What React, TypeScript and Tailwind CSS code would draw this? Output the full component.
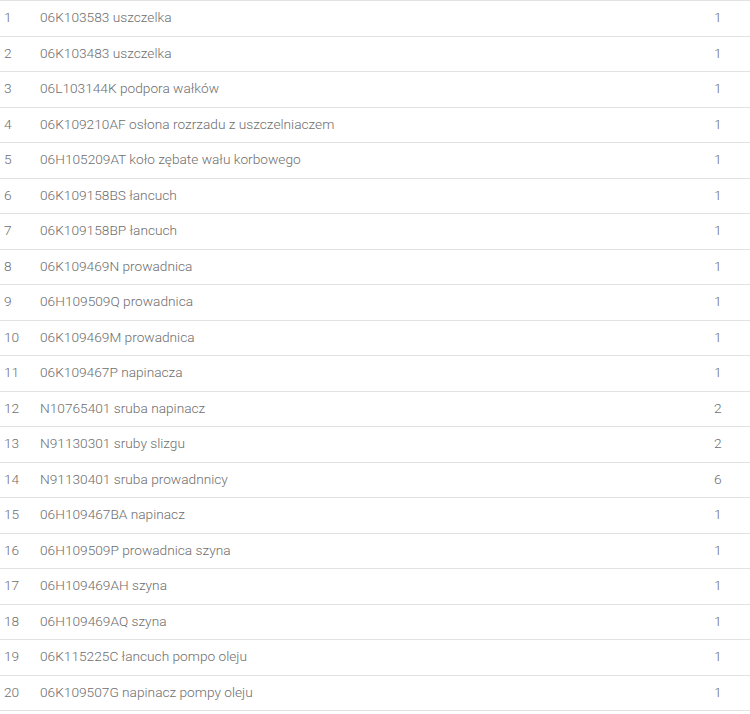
const rows: [string, number][] = [
  ['06K103583 uszczelka', 1],
  ['06K103483 uszczelka', 1],
  ['06L103144K podpora wałków', 1],
  ['06K109210AF osłona rozrzadu z uszczelniaczem', 1],
  ['06H105209AT koło zębate wału korbowego', 1],
  ['06K109158BS łancuch', 1],
  ['06K109158BP łancuch', 1],
  ['06K109469N prowadnica', 1],
  ['06H109509Q prowadnica', 1],
  ['06K109469M prowadnica', 1],
  ['06K109467P napinacza', 1],
  ['N10765401 sruba napinacz', 2],
  ['N91130301 sruby slizgu', 2],
  ['N91130401 sruba prowadnnicy', 6],
  ['06H109467BA napinacz', 1],
  ['06H109509P prowadnica szyna', 1],
  ['06H109469AH szyna', 1],
  ['06H109469AQ szyna', 1],
  ['06K115225C łancuch pompo oleju', 1],
  ['06K109507G napinacz pompy oleju', 1],
]

export default function App() {
  return (
    <div className="w-[750px] h-[714px] bg-white font-['Roboto',sans-serif] font-light text-[13.7px] text-[#6e6e6e]">
      <div className="border-b border-[#e2e2e2]">
        {rows.map(([name, qty], i) => (
          <div key={i} className="flex items-center h-[35.5px] pb-[1px] border-t border-[#e2e2e2]">
            <div className="w-[40px] pl-[4px]">{i + 1}</div>
            <div className="flex-1">{name}</div>
            <div className="w-[36px]">{qty}</div>
          </div>
        ))}
      </div>
    </div>
  )
}
